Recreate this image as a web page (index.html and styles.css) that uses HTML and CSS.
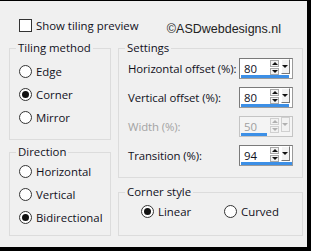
FILE: index.html
```html
<!DOCTYPE html>
<html>
<head>
<meta charset="utf-8">
<link rel="stylesheet" href="styles.css">
</head>
<body>
<div class="win">
  <div class="top">
    <label class="chk"><span class="box"></span>Show tiling preview</label>
    <span class="copy">©ASDwebdesigns.nl</span>
  </div>
  <div class="main">
    <div class="col left">
      <fieldset class="grp g-tiling">
        <legend>Tiling method</legend>
        <div class="radios">
          <div class="radio"><span class="dot"></span>Edge</div>
          <div class="radio on"><span class="dot"></span>Corner</div>
          <div class="radio"><span class="dot"></span>Mirror</div>
        </div>
      </fieldset>
      <fieldset class="grp g-dir">
        <legend>Direction</legend>
        <div class="radios">
          <div class="radio"><span class="dot"></span>Horizontal</div>
          <div class="radio"><span class="dot"></span>Vertical</div>
          <div class="radio on"><span class="dot"></span>Bidirectional</div>
        </div>
      </fieldset>
    </div>
    <div class="col right">
      <fieldset class="grp g-settings">
        <legend>Settings</legend>
        <div class="rows">
          <div class="row"><span class="lbl">Horizontal offset (%):</span>
            <div class="spin"><span class="val">80</span><span class="ud"><i class="up"></i><i class="dn"></i></span><span class="dd"></span><span class="bar" style="width:48px"></span></div></div>
          <div class="row"><span class="lbl">Vertical offset (%):</span>
            <div class="spin"><span class="val">80</span><span class="ud"><i class="up"></i><i class="dn"></i></span><span class="dd"></span><span class="bar" style="width:48px"></span></div></div>
          <div class="row dis"><span class="lbl">Width (%):</span>
            <div class="spin"><span class="val">50</span><span class="ud"><i class="up"></i><i class="dn"></i></span><span class="dd"></span><span class="bar" style="width:26px"></span></div></div>
          <div class="row"><span class="lbl">Transition (%):</span>
            <div class="spin"><span class="val">94</span><span class="ud"><i class="up"></i><i class="dn"></i></span><span class="dd"></span><span class="bar" style="width:51px"></span></div></div>
        </div>
      </fieldset>
      <fieldset class="grp g-corner">
        <legend>Corner style</legend>
        <div class="hradios">
          <div class="radio on"><span class="dot"></span>Linear</div>
          <div class="radio"><span class="dot"></span>Curved</div>
        </div>
      </fieldset>
    </div>
  </div>
</div>
</body>
</html>
```
FILE: styles.css
```css
* { box-sizing: border-box; }
html, body { margin: 0; padding: 0; }
body {
  width: 311px; height: 251px; overflow: hidden;
  background: #f0f0f0;
  font-family: "Open Sans", "Noto Sans", sans-serif;
  font-size: 11.4px; color: #10101c;
}
.win {
  width: 311px; height: 251px;
  background: #f0f0f0;
  border-top: 1px solid #000;
  border-right: 4px solid #000;
  border-bottom: 4px solid #000;
  padding: 0 0 0 9px;
}
.top {
  display: flex; align-items: flex-start; justify-content: space-between;
  height: 40px; padding: 17px 26px 0 10px;
}
.chk { display: flex; align-items: center; gap: 4px; line-height: 15px; }
.box {
  width: 13px; height: 13px; background: #fff; border: 1px solid #333;
}
.copy {
  font-family: "Liberation Sans", sans-serif; font-size: 12.5px; line-height: 15px;
  color: #222; margin-top: 4px;
}
.main { display: grid; grid-template-columns: 102px 185px; gap: 7px; }
.col { display: flex; flex-direction: column; }
.left { gap: 5px; }
.right { gap: 7px; }
fieldset.grp {
  margin: 0; border: 1px solid #dcdcdc; padding: 0 0 0 9px; min-width: 0;
}
legend { padding: 0 2px; margin-left: -3px; line-height: 14px; }
.g-tiling { height: 99px; }
.g-dir { height: 91px; }
.g-settings { height: 137px; padding-left: 7px; }
.g-corner { height: 51px; }
.radios { display: flex; flex-direction: column; gap: 6px; padding-top: 8px; }
.g-dir .radios { padding-top: 4px; }
.radio { display: flex; align-items: center; gap: 4px; height: 17px; }
.dot {
  width: 13px; height: 13px; border-radius: 50%; border: 1px solid #333; background: #fff;
  display: flex; align-items: center; justify-content: center; flex: none;
}
.radio.on .dot::after {
  content: ""; width: 7px; height: 7px; border-radius: 50%; background: #111;
}
.hradios { display: grid; grid-template-columns: 83px auto; padding: 4px 0 0 13px; }
.rows { display: flex; flex-direction: column; gap: 8px; padding-top: 3px; }
.row { display: flex; align-items: center; height: 21px; padding-right: 9px; }
.lbl { white-space: nowrap; letter-spacing: -0.1px; }
.row.dis .lbl { color: #a3a3a3; }
.spin {
  position: relative; margin-left: auto; flex: none;
  width: 54px; height: 21px; background: #fff;
  border: 1px solid #9a9a9a; border-top-color: #7a7a7a; border-left-color: #7a7a7a;
  display: flex; align-items: flex-start; padding-left: 4px;
}
.val { width: 26px; line-height: 17px; margin-top: 1px; }
.row.dis .val { color: #a0a0a0; }
.row.dis .spin { border-color: #c4c4c4; background: #f4f4f4; }
.ud { display: flex; flex-direction: column; gap: 1px; margin-top: 1px; }
.ud i {
  display: block; width: 9px; height: 7px; border: 1px solid #a8a8a8; background: #f2f2f2; position: relative;
}
.ud i::after {
  content: ""; position: absolute; left: 1px; border-left: 3px solid transparent; border-right: 3px solid transparent;
}
.ud .up::after { top: 1px; border-bottom: 3px solid #111; }
.ud .dn::after { top: 1px; border-top: 3px solid #111; }
.dd {
  width: 9px; height: 15px; margin-left: 2px; margin-top: 0; background: #f2f2f2;
  border-right: 1px solid #777; border-bottom: 1px solid #777; border-left: 1px solid #fff; border-top: 1px solid #fff;
  position: relative;
}
.dd::after {
  content: ""; position: absolute; left: 0; top: 5px;
  border-left: 3px solid transparent; border-right: 3px solid transparent; border-top: 3px solid #111;
}
.row.dis .ud .up::after { border-bottom-color: #b0b0b0; }
.row.dis .ud .dn::after, .row.dis .dd::after { border-top-color: #b0b0b0; }
.row.dis .ud i, .row.dis .dd { border-color: #d0d0d0; }
.bar { position: absolute; left: 1px; bottom: 0; height: 3px; background: #3c8fe6; }
```
